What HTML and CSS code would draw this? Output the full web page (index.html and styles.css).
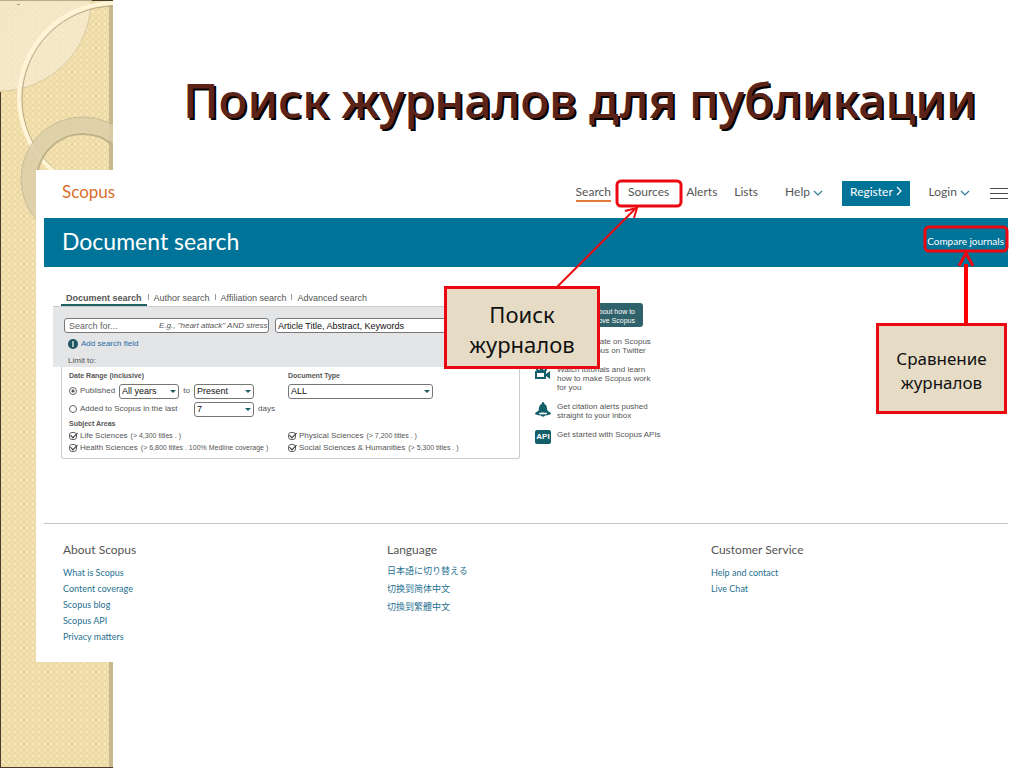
FILE: index.html
```html
<!DOCTYPE html>
<html lang="ru">
<head>
<meta charset="utf-8">
<title>Поиск журналов для публикации</title>
<link rel="stylesheet" href="styles.css">
</head>
<body>
<main class="slide">
  <svg class="side-art" width="114" height="768" viewBox="0 0 114 768" preserveAspectRatio="xMinYMin slice" aria-hidden="true">
    <defs>
      <pattern id="weave" width="6" height="6" patternUnits="userSpaceOnUse">
        <rect width="6" height="6" fill="#f2dfae"/>
        <path d="M0 0L6 6M6 0L0 6" stroke="#ecd7a3" stroke-width="1"/>
        <rect x="2" y="-1" width="2" height="2" fill="#f7e7bd"/>
        <rect x="2" y="5" width="2" height="2" fill="#f7e7bd"/>
      </pattern>
      <linearGradient id="glow" x1="0" y1="0" x2="1" y2="1">
        <stop offset="0" stop-color="#f4e8c8" stop-opacity=".7"/>
        <stop offset="1" stop-color="#f8eed6" stop-opacity=".7"/>
      </linearGradient>
      <clipPath id="strip"><rect width="113" height="768"/></clipPath>
    </defs>
    <g clip-path="url(#strip)">
      <rect width="113" height="768" fill="url(#weave)"/>
      <circle cx="0" cy="0" r="91" fill="url(#glow)" stroke="#d8cba4" stroke-width="1"/>
      <path d="M109 0H113V768H109Z" fill="#c9b88d"/>
      <circle cx="115" cy="99" r="93" fill="none" stroke="#b5aa88" stroke-width="1"/>
      <circle cx="114" cy="98" r="95" fill="none" stroke="#fff5d6" stroke-width="4"/>
      <circle cx="83" cy="179" r="54" fill="none" stroke="#dccfa9" stroke-opacity=".85" stroke-width="15"/>
      <circle cx="83" cy="179" r="62" fill="none" stroke="#c6bc97" stroke-width="1"/>
      <circle cx="83" cy="180" r="46" fill="none" stroke="#bfb28a" stroke-width="2"/>
      <path d="M0 92H1V768H0ZM92 0H113V1H92ZM0 767H113V768H0Z" fill="#4b3b2c"/>
      <path d="M0 0H92V1H0Z" fill="#b8ac8a"/>
      <path d="M17 4H20V5H17Z" fill="#a89c78"/>
    </g>
  </svg>

  <h1 class="slide-title">Поиск журналов для публикации</h1>

  <section class="shot">
    <header class="topbar">
      <a class="logo" href="#">Scopus</a>
      <nav class="nav">
        <a class="nav-link active" href="#">Search</a>
        <a class="nav-link" href="#">Sources</a>
        <a class="nav-link" href="#">Alerts</a>
        <a class="nav-link" href="#">Lists</a>
        <a class="nav-link help" href="#">Help <svg width="10" height="6" viewBox="0 0 10 6"><path d="M1 1L5 5L9 1" fill="none" stroke="#2b7d9c" stroke-width="1.2"/></svg></a>
        <button class="register" type="button">Register <svg width="6" height="10" viewBox="0 0 6 10"><path d="M1 1L5 5L1 9" fill="none" stroke="#fff" stroke-width="1.2"/></svg></button>
        <a class="nav-link login" href="#">Login <svg width="10" height="6" viewBox="0 0 10 6"><path d="M1 1L5 5L9 1" fill="none" stroke="#2b7d9c" stroke-width="1.2"/></svg></a>
        <button class="burger" type="button" aria-label="Menu"><svg width="18" height="11" viewBox="0 0 18 11" shape-rendering="crispEdges"><path d="M0 0H18V1H0ZM0 5H18V6H0ZM0 10H18V11H0Z" fill="#4a4a4a"/></svg></button>
      </nav>
    </header>

    <div class="band">
      <h2 class="band-title">Document search</h2>
      <a class="compare" href="#">Compare journals</a>
    </div>

    <div class="content">
      <form class="search">
        <nav class="tabs">
          <a class="tab current" href="#">Document search</a>
          <a class="tab" href="#">Author search</a>
          <a class="tab" href="#">Affiliation search</a>
          <a class="tab" href="#">Advanced search</a>
        </nav>
        <div class="query">
          <div class="query-row">
            <div class="query-box">
              <input class="query-input" type="text" placeholder="Search for..." aria-label="Search for">
              <span class="hint">E.g., "heart attack" AND stress</span>
            </div>
            <div class="pick pick-field">
              <select aria-label="Search within"><option>Article Title, Abstract, Keywords</option></select>
            </div>
          </div>
          <a class="add-field" href="#"><svg width="10" height="10" viewBox="0 0 10 10"><circle cx="5" cy="5" r="5" fill="#1f5563"/><path d="M5 2V8" stroke="#fff" stroke-width="1.2"/></svg>Add search field</a>
          <p class="limit">Limit to:</p>
        </div>
        <div class="limits">
          <div class="limits-cell">
            <p class="label">Date Range (inclusive)</p>
            <div class="line">
              <label class="choice choice-pub"><input class="radio" type="radio" name="range" checked>Published</label>
              <div class="pick year"><select aria-label="From year"><option>All years</option></select></div>
              <span class="to">to</span>
              <div class="pick year"><select aria-label="To year"><option>Present</option></select></div>
            </div>
            <div class="line">
              <label class="choice choice-added"><input class="radio" type="radio" name="range">Added to Scopus in the last</label>
              <div class="pick year"><select aria-label="Number of days"><option>7</option></select></div>
              <span>days</span>
            </div>
            <p class="label">Subject Areas</p>
            <label class="choice area"><input class="tick" type="checkbox" checked>Life Sciences <small>(&gt; 4,300 titles . )</small></label>
            <label class="choice area"><input class="tick" type="checkbox" checked>Health Sciences <small>(&gt; 6,800 titles . 100% Medline coverage )</small></label>
          </div>
          <div class="limits-cell second">
            <p class="label">Document Type</p>
            <div class="line">
              <div class="pick doc-type"><select aria-label="Document Type"><option>ALL</option></select></div>
            </div>
            <div class="areas">
              <label class="choice area"><input class="tick" type="checkbox" checked>Physical Sciences <small>(&gt; 7,200 titles . )</small></label>
              <label class="choice area"><input class="tick" type="checkbox" checked>Social Sciences &amp; Humanities <small>(&gt; 5,300 titles . )</small></label>
            </div>
          </div>
        </div>
      </form>

      <aside class="tips">
        <a class="learn" href="#">Learn about how to improve Scopus</a>
        <div class="tip">
          <svg width="16" height="16" viewBox="0 0 16 16"><path d="M1 3H15V12H6L3 15V12H1Z" fill="#14606a"/></svg>
          <p>Stay up to date on Scopus<br>Follow Scopus on Twitter</p>
        </div>
        <div class="tip">
          <svg width="16" height="16" viewBox="0 0 16 16"><circle cx="4" cy="4" r="2" fill="none" stroke="#14606a" stroke-width="2"/><circle cx="9" cy="4" r="2" fill="none" stroke="#14606a" stroke-width="2"/><path d="M0 6H11V9L15 6V14L11 11V14H0ZM2 8V12H9V8Z" fill="#14606a" fill-rule="evenodd"/></svg>
          <p>Watch tutorials and learn<br>how to make Scopus work<br>for you</p>
        </div>
        <div class="tip">
          <svg width="16" height="16" viewBox="0 0 16 16"><path d="M8 0C9 0 9.500 1 9.300 2C12 3 12 6 12.300 8C12.500 9.500 16 10 16 12C12 14 4 14 0 12C0 10 3.500 9.500 3.700 8C4 6 4 3 6.700 2C6.500 1 7 0 8 0Z" fill="#14606a"/><ellipse cx="8" cy="11.500" rx="4" ry="1" fill="#fff"/><path d="M6 12.500H10V13C10 15.300 6 15.300 6 13Z" fill="#14606a"/></svg>
          <p>Get citation alerts pushed<br>straight to your inbox</p>
        </div>
        <div class="tip">
          <span class="api">API</span>
          <p>Get started with Scopus APIs</p>
        </div>
      </aside>
    </div>

    <footer class="footer">
      <div class="foot-col">
        <h3>About Scopus</h3>
        <a href="#">What is Scopus</a>
        <a href="#">Content coverage</a>
        <a href="#">Scopus blog</a>
        <a href="#">Scopus API</a>
        <a href="#">Privacy matters</a>
      </div>
      <div class="foot-col languages">
        <h3>Language</h3>
        <a href="#" lang="ja">日本語に切り替える</a>
        <a href="#" lang="zh-Hans">切换到简体中文</a>
        <a href="#" lang="zh-Hant">切換到繁體中文</a>
      </div>
      <div class="foot-col">
        <h3>Customer Service</h3>
        <a href="#">Help and contact</a>
        <a href="#">Live Chat</a>
      </div>
    </footer>
  </section>

  <svg class="marks" width="1024" height="768" viewBox="0 0 1024 768" aria-hidden="true">
    <g fill="none" stroke="#ec0810">
      <rect x="617" y="181" width="64" height="25" rx="4" stroke-width="3"/>
      <rect x="925" y="227" width="82" height="24" rx="4" stroke-width="3"/>
      <path d="M557 287L635 209" stroke-width="2"/>
      <path d="M625 211L637 208L634 218" stroke-width="2"/>
      <path d="M966 324V264" stroke="#f00" stroke-width="4"/>
      <path d="M959 266L966 253L973 266" stroke-width="3"/>
    </g>
  </svg>
  <div class="callout callout-search">Поиск журналов</div>
  <div class="callout callout-compare">Сравнение журналов</div>
</main>
</body>
</html>
```
FILE: styles.css
```css
* { box-sizing: border-box; }

body {
  margin: 0;
  background: #fff;
  font-family: "Liberation Sans", Arial, sans-serif;
}

h1, h2, h3, p { margin: 0; font-weight: 400; }
a { color: inherit; text-decoration: none; }
button { border: 0; font: inherit; }

.slide { position: relative; min-height: 100vh; overflow: hidden; }

.side-art { position: absolute; left: 0; top: 0; height: 100%; }

.slide-title {
  position: relative;
  padding: 64px 46px 34px 183px;
  font-family: "Noto Sans", "Open Sans", sans-serif;
  font-size: 48px;
  font-weight: 500;
  line-height: 72px;
  white-space: nowrap;
  color: #5c2318;
  text-shadow: 2px 2px 0 #000;
}

.shot {
  position: relative;
  margin-left: 36px;
  padding: 0 16px 17px 8px;
  background: #fff;
  font-size: 8px;
  color: #555;
}

.topbar {
  display: flex;
  justify-content: space-between;
  align-items: center;
  height: 48px;
  padding: 0 0 2px 18px;
  font-family: Lato, sans-serif;
}
.logo { font-size: 17px; color: #d9702b; padding-bottom: 4px; }
.nav { display: flex; align-items: center; gap: 17px; font-size: 12px; line-height: 16px; }
.nav-link { border-bottom: 2px solid transparent; white-space: nowrap; }
.nav-link.active { border-color: #e0793a; }
.help { margin-left: 10px; }
.register {
  height: 25px;
  margin: 0 2px;
  padding: 0 8px 2px;
  background: #007398;
  color: #fff;
}
.burger { display: flex; margin-left: 3px; padding: 0; background: none; }

.band {
  display: flex;
  justify-content: space-between;
  align-items: center;
  height: 49px;
  padding: 0 4px 3px 18px;
  background: #007398;
  color: #fff;
  font-family: Lato, sans-serif;
}
.band-title { font-size: 23px; }
.compare { font-size: 10px; }

.content { display: flex; gap: 8px; padding: 24px 0 64px 9px; }
.search { width: 474px; }

.tabs { display: flex; gap: 11px; padding-left: 8px; height: 15px; font-size: 9px; line-height: 14px; }
.tab { position: relative; white-space: nowrap; }
.tab + .tab::before {
  content: "";
  position: absolute;
  left: -6px;
  top: 3px;
  width: 1px;
  height: 6px;
  background: #999;
}
.tab.current {
  margin-right: -4px;
  padding: 0 5px;
  border-bottom: 2px solid #1d5f63;
  font-weight: 700;
}

.query { padding: 11px 0 1px 11px; border-top: 1px solid #ccc; background: #e4e5e7; }
.query-row { display: flex; gap: 6px; }
.query-box {
  display: flex;
  align-items: center;
  width: 205px;
  height: 15px;
  padding: 0 4px;
  border: 1px solid #777;
  border-radius: 3px;
  background: #fff;
}
.query-input { width: 90px; padding: 0; border: 0; background: none; font: inherit; font-size: 9px; outline: 0; }
.query-input::placeholder { color: #666; }
.hint { margin-left: auto; font-size: 8px; font-style: italic; white-space: nowrap; }

.pick { position: relative; height: 15px; }
.pick::after {
  content: "";
  position: absolute;
  right: 3px;
  top: 6px;
  border: 3px solid transparent;
  border-top-color: #1d5f63;
  border-bottom: 0;
}
.pick select {
  display: block;
  width: 100%;
  height: 100%;
  padding: 0 2px;
  border: 1px solid #777;
  border-radius: 3px;
  background: #fff;
  color: #111;
  font: inherit;
  font-size: 9px;
  appearance: none;
}
.pick-field { width: 240px; }

.add-field { display: flex; align-items: center; gap: 3px; margin: 5px 0 0 4px; color: #2d6ca6; line-height: 12px; }
.limit { margin: 6px 0 0 4px; line-height: 10px; }

.limits {
  display: flex;
  margin: 0 7px 0 8px;
  padding: 3px 7px 4px;
  border: 1px solid #ccc;
  border-top: 0;
  border-radius: 0 0 3px 3px;
}
.limits-cell { width: 219px; line-height: 12px; white-space: nowrap; }
.label { font-size: 7px; font-weight: 700; line-height: 12px; }
.line { display: flex; align-items: center; gap: 4px; height: 18px; }
.choice { display: flex; align-items: center; gap: 3px; }
.choice small { font-size: 7px; }
.choice-pub { width: 46px; }
.choice-added { width: 121px; }
.to { width: 7px; text-align: center; }
.year { width: 60px; }
.doc-type { width: 145px; }
.areas { margin-top: 30px; }
.area { height: 12px; }

.radio, .tick { flex: none; width: 8px; height: 8px; margin: 0; border: 1px solid #666; appearance: none; }
.radio { border-radius: 50%; }
.radio:checked { background: radial-gradient(#555 1px, #fff 2px); }
.tick { position: relative; border-radius: 3px; }
.tick:checked::after {
  content: "";
  position: absolute;
  left: 2px;
  top: -2px;
  width: 3px;
  height: 6px;
  border: solid #333;
  border-width: 0 1px 1px 0;
  transform: rotate(45deg);
}

.tips { display: flex; flex-direction: column; gap: 10px; padding-top: 12px; line-height: 9px; white-space: nowrap; }
.learn {
  width: 80px;
  height: 24px;
  margin: 0 0 0 28px;
  padding: 4px 8px 0 0;
  border-radius: 3px;
  background: #2f626b;
  color: #fff;
  font-size: 7px;
  text-align: right;
  white-space: normal;
}
.tip { display: flex; gap: 6px; }
.tip svg { flex: none; }
.api {
  width: 16px;
  height: 14px;
  border-radius: 2px;
  background: #14606a;
  color: #fff;
  font-size: 8px;
  font-weight: 700;
  line-height: 14px;
  text-align: center;
}

.footer {
  display: grid;
  grid-template-columns: 12fr 12fr 11fr;
  padding: 17px 0 0 19px;
  border-top: 1px solid #c4c4c4;
  font-family: Lato, "Noto Sans CJK JP", "Noto Sans CJK SC", sans-serif;
}
.foot-col h3 { margin-bottom: 7px; font-size: 12px; line-height: 17px; }
.foot-col a { display: block; width: max-content; color: #1f7190; font-size: 9px; line-height: 16px; }
.languages h3 { margin-bottom: 4px; }
.languages a { line-height: 18px; }

.marks { position: absolute; left: 0; top: 0; }

.callout {
  position: absolute;
  display: flex;
  align-items: center;
  justify-content: center;
  border: 3px solid #ec0810;
  background: #e6dcc6;
  color: #111;
  font-family: "Noto Sans", "Open Sans", sans-serif;
  text-align: center;
}
.callout-search { left: 444px; top: 286px; width: 156px; height: 83px; padding: 2px 20px 0; font-size: 22px; line-height: 30px; }
.callout-compare { left: 876px; top: 323px; width: 131px; height: 91px; padding: 4px 12px 0; font-size: 17px; line-height: 24px; }
```
